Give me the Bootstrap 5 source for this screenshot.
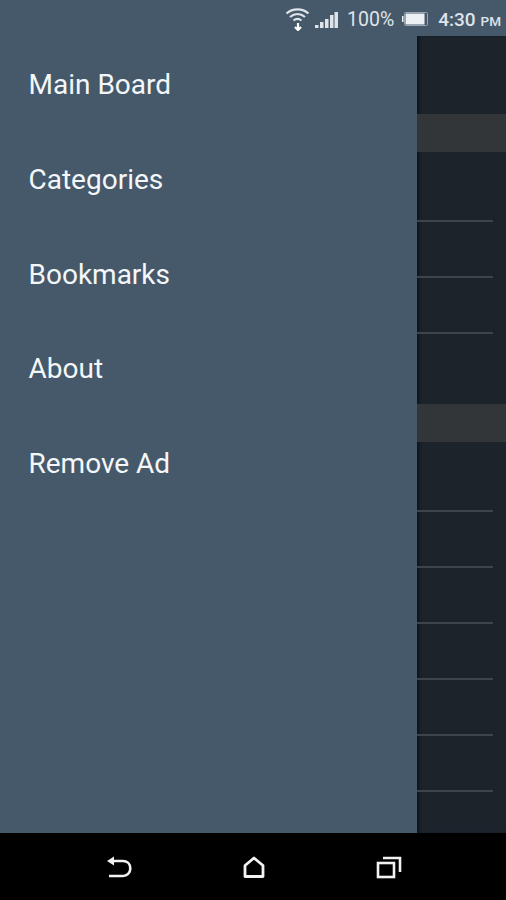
<!DOCTYPE html>
<html lang="en">
  <head>
    <meta charset="UTF-8" />
    <meta name="viewport" content="width=device-width, initial-scale=1.0" />
    <title>Menu</title>
    <link
      rel="stylesheet"
      href="https://cdn.jsdelivr.net/npm/bootstrap@5.3.2/dist/css/bootstrap.min.css"
    />
    <style>
      html, body { height: 900px; overflow: hidden; background: #000; }
      .phone-screen { width: 506px; height: 900px; font-family: Roboto, "Liberation Sans", sans-serif; }
      .status-strip { height: 36px; background: #46596b; color: #dfe4e9; padding-left: 285px; padding-top: 3px; }
      .status-strip svg { flex: none; }
      .status-wifi { margin-top: -2px; }
      .status-signal { margin-left: 5px; }
      .status-pct { font-size: 19.5px; line-height: 1; margin-left: 9px; }
      .status-batt { margin-left: 8px; margin-top: -1px; }
      .status-time { font-size: 19px; font-weight: 500; line-height: 1; margin-left: 10px; white-space: nowrap; }
      .status-ampm { font-size: 13.5px; font-weight: 500; margin-left: 5px; }
      .app-area { height: 797px; }
      .side-drawer { width: 417px; background: #46596b; padding-top: 2px; }
      .drawer-link { display: block; height: 94.75px; line-height: 94px; padding-left: 28.5px; color: #f4f7f9; font-size: 28px; text-decoration: none; }
      .behind-list { width: 89px; background: #1c232b; box-shadow: inset 3px 0 3px -1px #0f151c; }
      .head-gap { height: 78px; }
      .section-band { height: 38px; background: #333639; }
      .first-row { height: 70px; }
      .list-row { height: 56px; }
      .first-row, .list-row { border-bottom: 2px solid #3d444c; margin-right: 13px; }
      .middle-gap { height: 70px; }
      .nav-strip { height: 67px; background: #000; padding-left: 106px; }
      .nav-strip svg { display: block; flex: none; }
      .nav-home { margin-left: 110px; }
      .nav-recent { margin-left: 110px; }
    </style>
  </head>
  <body>
    <div class="phone-screen d-flex flex-column">
      <div class="status-strip d-flex align-items-center">
        <svg class="status-wifi" width="25" height="24" viewBox="0 0 25 24" fill="none" stroke="#dfe4e9" stroke-width="2.200">
          <path d="M1.500 6.500C7.500 1 17.500 1 23.500 6.500" />
          <path d="M5 10C9.500 6 15.500 6 20 10" />
          <path d="M8.500 13.500C11 11.500 14 11.500 16.500 13.500" />
          <path d="M13 16v7M10 20 13 23l3-3" stroke="#fff" />
        </svg>
        <svg class="status-signal" width="23" height="18" viewBox="0 0 23 18" fill="#dfe4e9">
          <rect x="0" y="14" width="3.500" height="3" />
          <rect x="5" y="11" width="3.500" height="6" />
          <rect x="10" y="8" width="3.500" height="9" />
          <rect x="15" y="4" width="3.500" height="13" />
          <rect x="19.500" y="1" width="3.500" height="16" />
        </svg>
        <span class="status-pct">100%</span>
        <svg class="status-batt" width="26" height="14" viewBox="0 0 26 14" fill="#eef1f4">
          <rect x="0" y="4" width="1.500" height="6" />
          <rect x="2.500" y="0.500" width="23" height="13" rx="1" fill="none" stroke="#9aa6b1" />
          <rect x="3.500" y="1.500" width="19" height="11" />
        </svg>
        <span class="status-time">4:30<span class="status-ampm">PM</span></span>
      </div>

      <div class="app-area d-flex">
        <nav class="side-drawer">
          <a class="drawer-link" href="#">Main Board</a>
          <a class="drawer-link" href="#">Categories</a>
          <a class="drawer-link" href="#">Bookmarks</a>
          <a class="drawer-link" href="#">About</a>
          <a class="drawer-link" href="#">Remove Ad</a>
        </nav>
        <div class="behind-list">
          <div class="head-gap"></div>
          <div class="section-band"></div>
          <div class="first-row"></div>
          <div class="list-row"></div>
          <div class="list-row"></div>
          <div class="middle-gap"></div>
          <div class="section-band"></div>
          <div class="first-row"></div>
          <div class="list-row"></div>
          <div class="list-row"></div>
          <div class="list-row"></div>
          <div class="list-row"></div>
          <div class="list-row"></div>
        </div>
      </div>

      <div class="nav-strip d-flex align-items-center">
        <svg width="26" height="24" viewBox="0 0 26 24" fill="none" stroke="#f2f2f2" stroke-width="2.600">
          <path d="M5 6H17C21 6 24.300 8.800 24.300 13.500C24.300 18 21 21 17 21H3" />
          <path d="M1 6 8 1.500V10.500Z" fill="#f2f2f2" stroke="none" />
        </svg>
        <svg class="nav-home" width="24" height="24" viewBox="0 0 24 24" fill="none" stroke="#f2f2f2" stroke-width="2.800">
          <path d="M3 10.500 12 3 21 10.500V21.500H3Z" stroke-linejoin="round" />
        </svg>
        <svg class="nav-recent" width="26" height="24" viewBox="0 0 26 24" fill="none" stroke="#f2f2f2" stroke-width="2.600">
          <rect x="2" y="8" width="16" height="14" />
          <path d="M7 3H24V17" />
        </svg>
      </div>
    </div>
    <script src="https://cdn.jsdelivr.net/npm/bootstrap@5.3.2/dist/js/bootstrap.bundle.min.js"></script>
  </body>
</html>
